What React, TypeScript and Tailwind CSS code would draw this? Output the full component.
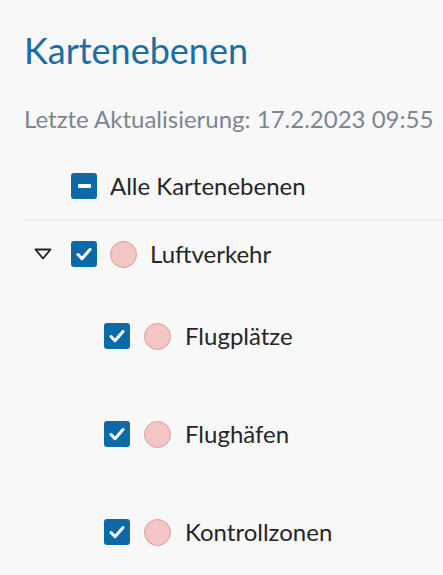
import React from 'react';

const FONT = "font-['Lato','Noto_Sans',sans-serif]";

function Box({ mixed = false }: { mixed?: boolean }) {
  return (
    <span className="flex h-[26px] w-[26px] shrink-0 items-center justify-center rounded-[3px] bg-[#0d6aa8]">
      {mixed ? (
        <span className="h-[4px] w-[13px] rounded-[1px] bg-white" />
      ) : (
        <svg viewBox="0 0 26 26" className="h-[26px] w-[26px]" aria-hidden="true">
          <path d="M7 13.5l4 4.2 8-9.2" fill="none" stroke="white" strokeWidth="3" strokeLinecap="round" strokeLinejoin="round" />
        </svg>
      )}
    </span>
  );
}

function Dot() {
  return <span className="h-[27px] w-[27px] shrink-0 rounded-full border-[1.5px] border-[#d89c9c] bg-[#f3c5c5]" />;
}

function Layer({ label }: { label: string }) {
  return (
    <li className="flex h-[98px] items-center gap-[14px] pl-[80px]">
      <Box />
      <Dot />
      <span className="text-[24px] leading-[30px] text-[#262626]">{label}</span>
    </li>
  );
}

export default function App() {
  const children = ['Flugplätze', 'Flughäfen', 'Kontrollzonen'];

  return (
    <div className={`h-[575px] w-[443px] overflow-hidden bg-[#f8f8f8] ${FONT}`}>
      <div className="pl-[24px] pt-[28px]">
        <h1 className="text-[36px] leading-[44px] text-[#1b6da6]">Kartenebenen</h1>
        <p className="mt-[31px] text-[24px] leading-[32px] text-[#7d8591]">
          Letzte Aktualisierung: 17.2.2023 09:55
        </p>

        {/* Alle */}
        <div className="mt-[38px] flex h-[26px] items-center gap-[13px] pl-[47px]">
          <Box mixed />
          <span className="text-[24px] leading-[30px] text-[#262626]">Alle Kartenebenen</span>
        </div>
        <div className="mt-[20px] h-[2px] bg-[#efefef]" />

        {/* Gruppe */}
        <div className="mt-[20px] flex h-[26px] items-center gap-[13px] pl-[10px]">
          <svg viewBox="0 0 18 12" className="mr-[6px] h-[12px] w-[18px]" aria-hidden="true">
            <path d="M1.5 1.5h15L9 10.5z" fill="none" stroke="#222" strokeWidth="1.8" strokeLinejoin="round" />
          </svg>
          <Box />
          <Dot />
          <span className="text-[24px] leading-[30px] text-[#262626]">Luftverkehr</span>
        </div>
        <ul className="mt-[20px]">
          {children.map((c) => (
            <Layer key={c} label={c} />
          ))}
        </ul>
      </div>
    </div>
  );
}
